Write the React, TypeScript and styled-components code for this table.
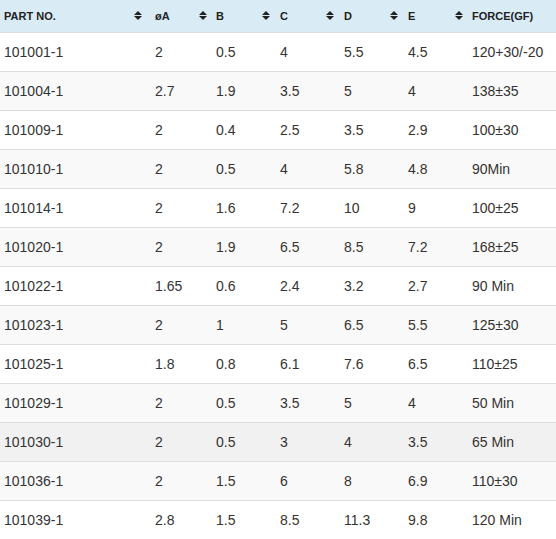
import React from "react";
import styled, { createGlobalStyle } from "styled-components";

const GlobalStyle = createGlobalStyle`
  html, body { margin: 0; padding: 0; background: #ffffff; }
  body { font-family: "Liberation Sans", Arial, sans-serif; }
`;

const Table = styled.table`
  width: 556px;
  border-collapse: collapse;
  table-layout: fixed;
  font-family: "Liberation Sans", Arial, sans-serif;
`;

const HeadRow = styled.tr`
  background: #d9ebf5;
`;

const HeadCell = styled.th`
  height: 32px;
  padding: 0;
  text-align: left;
  vertical-align: middle;
`;

const HeadInner = styled.div<{ $gap: number }>`
  display: flex;
  align-items: center;
  justify-content: space-between;
  padding-left: 4px;
  padding-right: ${(p) => p.$gap}px;
  font-size: 11px;
  font-weight: bold;
  color: #222222;
  line-height: 32px;
`;

const SortIcon = styled.svg`
  width: 8px;
  height: 9px;
  flex: none;
  margin-top: -2px;
`;

const BodyRow = styled.tr<{ $striped: boolean; $hover: boolean }>`
  background: ${(p) => (p.$hover ? "#f1f1f1" : p.$striped ? "#f9f9f9" : "#ffffff")};
`;

const Cell = styled.td`
  height: 38px;
  padding: 0 0 0 4px;
  border-top: 1px solid #dddddd;
  font-size: 14px;
  color: #333333;
  vertical-align: middle;
  white-space: nowrap;
`;

const columns = [
  { label: "PART NO.", width: 151, gap: 9, sort: true },
  { label: "øA", width: 61, gap: 5, sort: true },
  { label: "B", width: 64, gap: 6, sort: true },
  { label: "C", width: 64, gap: 6, sort: true },
  { label: "D", width: 64, gap: 6, sort: true },
  { label: "E", width: 64, gap: 5, sort: true },
  { label: "FORCE(GF)", width: 88, gap: 0, sort: false },
];

const rows: string[][] = [
  ["101001-1", "2", "0.5", "4", "5.5", "4.5", "120+30/-20"],
  ["101004-1", "2.7", "1.9", "3.5", "5", "4", "138±35"],
  ["101009-1", "2", "0.4", "2.5", "3.5", "2.9", "100±30"],
  ["101010-1", "2", "0.5", "4", "5.8", "4.8", "90Min"],
  ["101014-1", "2", "1.6", "7.2", "10", "9", "100±25"],
  ["101020-1", "2", "1.9", "6.5", "8.5", "7.2", "168±25"],
  ["101022-1", "1.65", "0.6", "2.4", "3.2", "2.7", "90 Min"],
  ["101023-1", "2", "1", "5", "6.5", "5.5", "125±30"],
  ["101025-1", "1.8", "0.8", "6.1", "7.6", "6.5", "110±25"],
  ["101029-1", "2", "0.5", "3.5", "5", "4", "50 Min"],
  ["101030-1", "2", "0.5", "3", "4", "3.5", "65 Min"],
  ["101036-1", "2", "1.5", "6", "8", "6.9", "110±30"],
  ["101039-1", "2.8", "1.5", "8.5", "11.3", "9.8", "120 Min"],
];

const Sort = () => (
  <SortIcon viewBox="0 0 8 9">
    <path d="M4 0 L8 4 L0 4 Z" fill="#222" />
    <path d="M0 5 L8 5 L4 9 Z" fill="#222" />
  </SortIcon>
);

export default function App() {
  return (
    <>
      <GlobalStyle />
      <Table>
        <colgroup>
          {columns.map((c) => (
            <col key={c.label} style={{ width: c.width }} />
          ))}
        </colgroup>
        <thead>
          <HeadRow>
            {columns.map((c) => (
              <HeadCell key={c.label}>
                <HeadInner $gap={c.gap}>
                  <span>{c.label}</span>
                  {c.sort && <Sort />}
                </HeadInner>
              </HeadCell>
            ))}
          </HeadRow>
        </thead>
        <tbody>
          {rows.map((r, i) => (
            <BodyRow key={r[0]} $striped={i % 2 === 1} $hover={r[0] === "101030-1"}>
              {r.map((v, j) => (
                <Cell key={j}>{v}</Cell>
              ))}
            </BodyRow>
          ))}
        </tbody>
      </Table>
    </>
  );
}
